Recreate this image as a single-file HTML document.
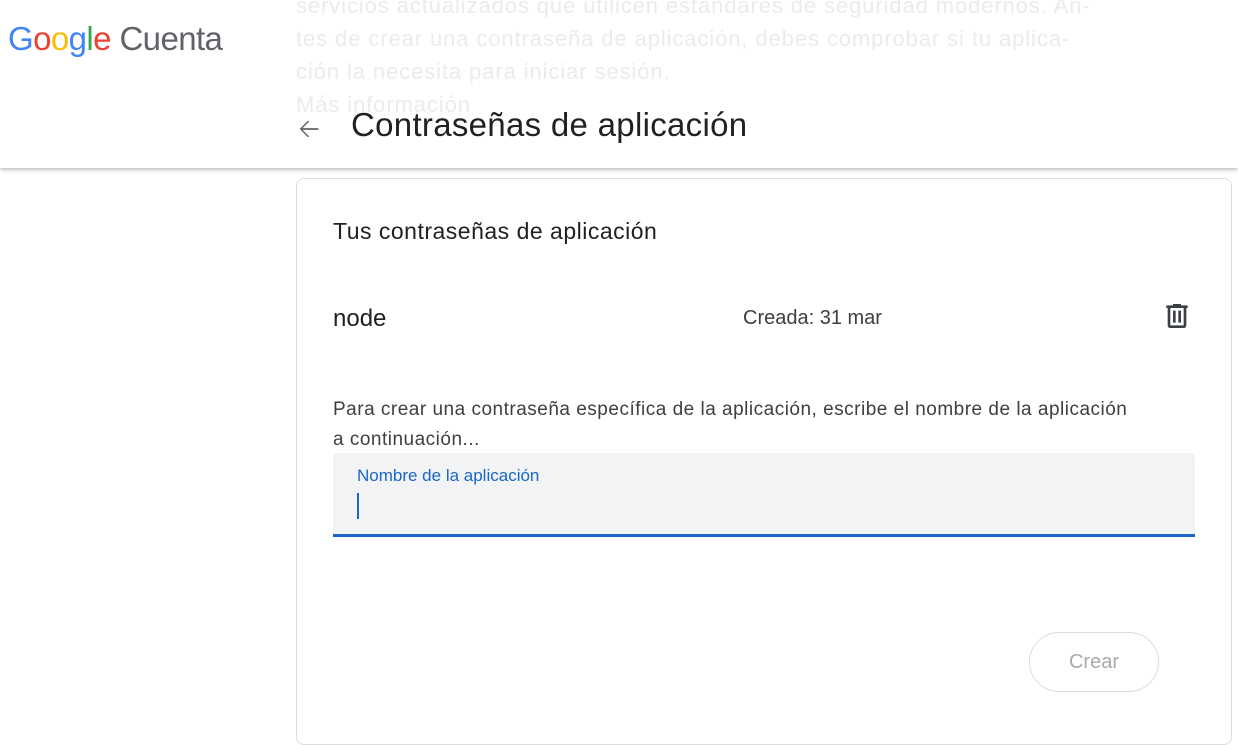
<!DOCTYPE html>
<html><head><meta charset="utf-8"><style>
body{margin:0;width:1238px;height:745px;overflow:hidden;background:#fff;font-family:"Liberation Sans",Arial,sans-serif;position:relative}
.bg{position:absolute;left:296px;font-size:22px;color:#ebebeb;line-height:33px;top:-11px;width:900px;z-index:2;letter-spacing:0.9px}
.hdr{position:absolute;left:0;top:0;width:1238px;height:168px;box-shadow:0 2px 4px rgba(0,0,0,.25);background:#fff}
.logo{position:absolute;left:8px;top:20px;font-size:33px;letter-spacing:-0.6px}
.title{position:absolute;left:351px;top:106px;font-size:33px;color:#202124;letter-spacing:0.3px}
.card{position:absolute;left:296px;top:178px;width:934px;height:565px;border:1px solid #dadce0;border-radius:8px}
.t{position:absolute;font-size:20px;color:#202124}
</style></head><body>
<div class="hdr">
<div class="logo"><span style="color:#4285f4">G</span><span style="color:#ea4335">o</span><span style="color:#fbbc05">o</span><span style="color:#4285f4">g</span><span style="color:#34a853">l</span><span style="color:#ea4335">e</span> <span style="color:#5f6368">Cuenta</span></div>
<svg style="position:absolute;left:295px;top:115px" width="28" height="28" viewBox="0 0 24 24"><path d="M20 11.3H6.5l5.6-5.6-.9-.9L4 12l7.2 7.2.9-.9-5.6-5.6H20z" fill="#5f6368"/></svg>
<div class="title">Contraseñas de aplicación</div>
</div>
<div class="bg">servicios actualizados que utilicen estándares de seguridad modernos. An-<br>tes de crear una contraseña de aplicación, debes comprobar si tu aplica-<br>ción la necesita para iniciar sesión.<br>Más información</div>
<div class="card"></div>
<div class="t" style="left:333px;top:218px;font-size:23px;letter-spacing:0.5px">Tus contraseñas de aplicación</div>
<div class="t" style="left:333px;top:305px;font-size:24px">node</div>
<div class="t" style="left:743px;top:307px;font-size:20px;color:#3c4043">Creada: 31 mar</div>
<svg style="position:absolute;left:1161px;top:300px" width="32" height="32" viewBox="0 0 24 24"><path d="M15 4V3H9v1H4v2h1v13c0 1.1.9 2 2 2h10c1.1 0 2-.9 2-2V6h1V4h-5zm2 15H7V6h10v13zM9 8h2v9H9zm4 0h2v9h-2z" fill="#3c4043"/></svg>
<div class="t" style="left:333px;top:395px;font-size:19px;line-height:30px;color:#3c4043;width:870px;letter-spacing:0.5px;white-space:nowrap">Para crear una contraseña específica de la aplicación, escribe el nombre de la aplicación<br>a continuación...</div>
<div style="position:absolute;left:333px;top:453px;width:862px;height:81px;background:#f1f3f4;border-radius:4px 4px 0 0;border-bottom:3px solid #1a66c9"></div>
<div class="t" style="left:357px;top:466px;font-size:17px;color:#1a66c9">Nombre de la aplicación</div>
<div style="position:absolute;left:357px;top:493px;width:2px;height:26px;background:#1a66c9"></div>
<div style="position:absolute;left:1029px;top:632px;width:128px;height:58px;border:1px solid #dadce0;border-radius:30px;color:#aaa;font-size:20px;text-align:center;line-height:58px">Crear</div>
</body></html>
